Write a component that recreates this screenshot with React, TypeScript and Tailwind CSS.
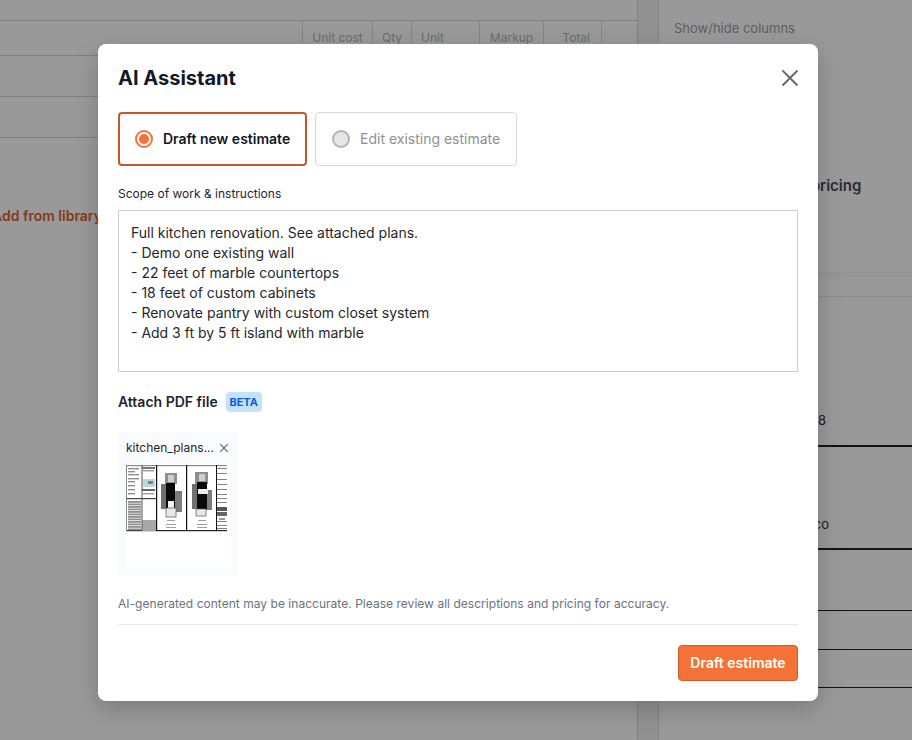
const FONT = { fontFamily: "Inter, 'Liberation Sans', sans-serif" };

const SCOPE = `Full kitchen renovation. See attached plans.
- Demo one existing wall
- 22 feet of marble countertops
- 18 feet of custom cabinets
- Renovate pantry with custom closet system
- Add 3 ft by 5 ft island with marble`;

function BackgroundTable() {
  return (
    <div className="w-[638px] shrink-0 h-full border-r border-[#d8d8d8] overflow-hidden">
      <div className="h-5" />
      <div className="h-[36px] border-y border-[#d4d4d4] flex justify-end text-xs text-[#b4b4b4] leading-[34px]">
        <span className="w-[70px] border-l border-[#dcdcdc] text-center">Unit cost</span>
        <span className="w-[39px] border-l border-[#dcdcdc] text-center">Qty</span>
        <span className="w-[68px] border-l border-[#dcdcdc] pl-[9px]">Unit</span>
        <span className="w-[64px] border-l border-[#dcdcdc] text-center">Markup</span>
        <span className="w-[58px] border-l border-[#dcdcdc] text-right pr-[11px]">Total</span>
        <span className="w-[36px] border-l border-[#dcdcdc]" />
      </div>
      <div className="h-[41px] border-b border-[#d4d4d4]" />
      <div className="h-[41px] border-b border-[#d4d4d4]" />
      <div className="h-[59px]" />
      <div className="h-[38px] -ml-[8px] flex items-center text-sm font-semibold whitespace-nowrap text-[#e05f30]">
        Add from library
      </div>
    </div>
  );
}

function BackgroundSidebar() {
  return (
    <div className="flex-1 h-full border-l border-[#e2e2e2] overflow-hidden text-[13px]">
      <div className="h-[272px] pl-[15px] pt-[19px]">
        <p className="text-[#9c9ca6]">Show/hide columns</p>
        <p className="mt-[136px] ml-[101px] whitespace-nowrap text-[15px] font-semibold text-[#474b56]">Item pricing</p>
      </div>
      <div className="h-[5px] bg-[#f7f7f7]" />
      <div className="h-[20px] border-b border-[#e4e4e4]" />
      <div className="h-[150px] border-b-2 border-[#222] flex items-end justify-end pb-[15px] pr-[86px] text-[#333]">8</div>
      <div className="h-[103px] border-b-2 border-[#222] flex items-end justify-end pb-[14px] pr-[83px] text-[#333]">co</div>
      <div className="h-[61px] border-b border-[#222]" />
      <div className="h-[39px] border-b border-[#222]" />
      <div className="h-[38px] border-b border-[#222]" />
    </div>
  );
}

function Radio({ active }: { active?: boolean }) {
  if (active) {
    return (
      <span className="w-[18px] h-[18px] rounded-full border-2 border-[#f47235] bg-white flex items-center justify-center shrink-0">
        <span className="w-[10px] h-[10px] rounded-full bg-[#f47235]" />
      </span>
    );
  }
  return <span className="w-[18px] h-[18px] rounded-full border-2 border-[#b4b4b4] bg-[#e8e6e6] shrink-0" />;
}

// tiny floor plan sheet, drawn loosely and softened to read like a scaled down PDF page
function PlanThumbnail() {
  const topRows = [3, 6, 9, 13, 16, 20, 24, 28];
  const denseRows = [36, 38.5, 41, 43.5, 46, 48.5, 51, 53.5, 56, 58.5, 61, 63.5];
  const titleRows = [3, 8, 14, 19, 24, 29, 33, 37, 56, 60, 63];
  return (
    <svg viewBox="0 0 103 67" className="w-[103px] h-[67px] block blur-[0.45px]">
      <rect width="101" height="66" fill="#fff" />
      <rect x="0" y="0" width="101" height="1.2" fill="#8c8c8c" />
      <rect x="0" y="65" width="101" height="1.2" fill="#222" />
      <rect x="0" y="0" width="1" height="66" fill="#888" />

      {topRows.map((y) => (
        <rect key={y} x="2" y={y} width={y % 2 ? 11 : 7} height="1.4" fill="#8d8d8d" />
      ))}
      {denseRows.map((y) => (
        <rect key={y} x="2" y={y} width="13" height="1.8" fill="#8e8e8e" />
      ))}
      <rect x="1" y="33" width="29" height="1.2" fill="#444" />
      <rect x="16" y="2" width="13" height="2" fill="#777" />
      <rect x="17" y="5" width="11" height="1.4" fill="#999" />
      <rect x="17" y="14" width="12" height="8" fill="#bcd6dc" />
      <rect x="22" y="16" width="5" height="3" fill="#6b8790" />
      <rect x="16" y="24" width="13" height="2" fill="#666" />
      <rect x="17" y="28" width="11" height="1.4" fill="#999" />
      <rect x="16" y="55" width="14" height="11" fill="#a8a8a8" />
      <rect x="15.5" y="0" width="1" height="66" fill="#555" />
      <rect x="30" y="0" width="1.2" height="66" fill="#111" />
      <rect x="60" y="0" width="1.2" height="66" fill="#111" />
      <rect x="90" y="0" width="1" height="66" fill="#111" />

      <rect x="39" y="8" width="12" height="11" fill="#8f8f8f" />
      <rect x="42" y="10" width="6" height="7" fill="#cfcfcf" />
      <rect x="35" y="19" width="14" height="25" fill="#6f6f6f" />
      <rect x="49" y="26" width="7" height="21" fill="#7d7d7d" />
      <rect x="40" y="18" width="9" height="25" fill="#0a0a0a" />
      <rect x="42" y="36" width="6" height="7" fill="#f2f2f2" />
      <rect x="40" y="43" width="10" height="9" fill="#e8e8e8" stroke="#555" strokeWidth="0.7" />
      <rect x="41" y="55" width="8" height="0.7" fill="#777" />
      <rect x="40" y="59" width="10" height="0.7" fill="#777" />
      <rect x="40" y="62" width="10" height="0.7" fill="#777" />

      <rect x="69" y="7" width="13" height="12" fill="#8f8f8f" />
      <rect x="73" y="9" width="6" height="7" fill="#cfcfcf" />
      <rect x="66" y="19" width="13" height="25" fill="#6f6f6f" />
      <rect x="80" y="25" width="6" height="20" fill="#7d7d7d" />
      <rect x="71" y="17" width="10" height="27" fill="#0a0a0a" />
      <rect x="72" y="24" width="10" height="5" fill="#efefef" />
      <rect x="70" y="44" width="10" height="7" fill="#e8e8e8" stroke="#555" strokeWidth="0.7" />
      <rect x="72" y="55" width="8" height="0.7" fill="#777" />
      <rect x="71" y="59" width="10" height="0.7" fill="#777" />
      <rect x="71" y="62" width="10" height="0.7" fill="#777" />

      {titleRows.map((y) => (
        <rect key={y} x="91" y={y} width="10" height="0.9" fill="#777" />
      ))}
      <rect x="91" y="42" width="10" height="4" fill="#555" />
      <rect x="91" y="47" width="10" height="4" fill="#666" />
      <rect x="93" y="53" width="6" height="2" fill="#999" />
    </svg>
  );
}

function AttachmentCard() {
  return (
    <div className="w-[120px] h-[144px] bg-[#f9fbfc] px-2 pt-2">
      <div className="flex items-center justify-between h-4 text-xs text-[#1f2430] leading-4">
        <span className="whitespace-nowrap">kitchen_plans...</span>
        <svg viewBox="0 0 10 10" className="w-[10px] h-[10px] mr-[1px]" fill="none" stroke="#666" strokeWidth="1.2">
          <path d="M1.2 1.2 8.8 8.8M8.8 1.2 1.2 8.8" />
        </svg>
      </div>
      <div className="mt-[9px] mr-[-1px] h-[103px] bg-white">
        <PlanThumbnail />
      </div>
    </div>
  );
}

export default function App() {
  return (
    <div className="relative h-[740px] w-[912px] overflow-hidden bg-white" style={FONT}>
      <div className="flex h-full">
        <BackgroundTable />
        <div className="w-5 shrink-0 h-full bg-[#f2f2f2]" />
        <BackgroundSidebar />
      </div>

      {/* dimmed overlay + modal */}
      <div className="absolute inset-0 bg-black/40 flex justify-center items-start pt-[44px] pl-1">
        <div className="w-[720px] h-[657px] bg-white rounded-lg shadow-[0_8px_24px_rgba(0,0,0,0.2)] px-5 pt-5 flex flex-col">
          <div className="flex items-center justify-between h-7">
            <h1 className="text-xl leading-7 font-bold text-[#111827]">AI Assistant</h1>
            <svg viewBox="0 0 18 18" className="w-[18px] h-[18px] mr-[-1px]" fill="none" stroke="#6b6464" strokeWidth="1.8">
              <path d="M1.5 1.5 16.5 16.5M16.5 1.5 1.5 16.5" />
            </svg>
          </div>

          <div className="flex gap-2 mt-5">
            <div className="w-[189px] h-[54px] rounded border-2 border-[#c9562f] flex items-center gap-[10px] pl-[15px]">
              <Radio active />
              <span className="text-sm font-semibold text-[#111827]">Draft new estimate</span>
            </div>
            <div className="w-[202px] h-[54px] rounded border border-[#d6d6d6] flex items-center gap-[10px] pl-4">
              <Radio />
              <span className="text-sm text-[#8f8f8f]">Edit existing estimate</span>
            </div>
          </div>

          <label className="mt-5 text-xs leading-4 text-[#1f2430]">Scope of work &amp; instructions</label>
          <div className="mt-2 h-[162px] border border-[#cfcfcf] px-3 py-3 text-sm leading-5 text-[#27272a] whitespace-pre-line">
            {SCOPE}
          </div>

          <div className="flex items-center gap-2 mt-5 h-5">
            <span className="text-sm font-semibold text-[#1f2430]">Attach PDF file</span>
            <span className="w-9 h-5 text-center rounded bg-[#bfe3fb] text-[11px] font-bold leading-5 text-[#1558d6]">BETA</span>
          </div>

          <div className="mt-5">
            <AttachmentCard />
          </div>

          <p className="mt-5 text-xs leading-4 tracking-[0.03px] text-[#6b7280]">
            AI-generated content may be inaccurate. Please review all descriptions and pricing for accuracy.
          </p>
          <div className="mt-3 border-t border-[#e5e7eb]" />
          <div className="flex justify-end mt-5">
            <button className="w-[120px] h-9 rounded bg-[#f47235] border border-[#cf5a2e] text-sm font-semibold text-white">
              Draft estimate
            </button>
          </div>
        </div>
      </div>
    </div>
  );
}
